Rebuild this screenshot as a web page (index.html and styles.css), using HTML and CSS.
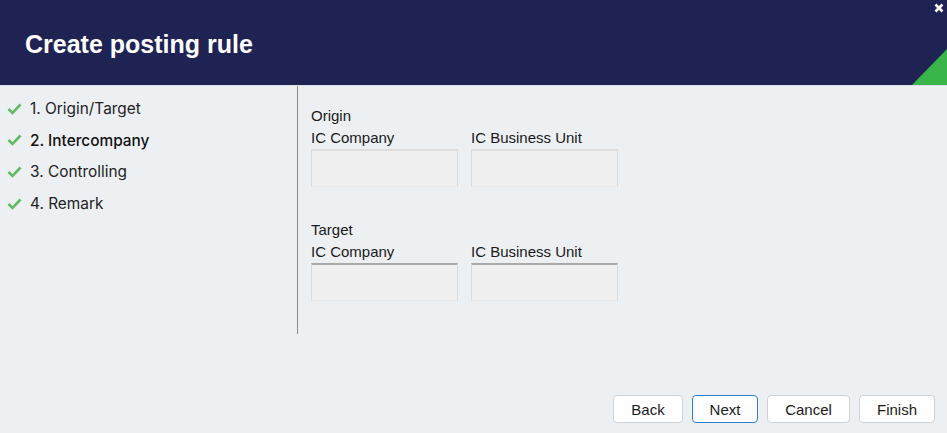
FILE: index.html
```html
<!DOCTYPE html>
<html lang="en">
<head>
    <meta charset="UTF-8">
    <title>Create posting rule</title>
    <link rel="stylesheet" href="styles.css">
</head>
<body>
    <div class="dialog">
        <header class="dialog-header">
            <h1>Create posting rule</h1>
            <svg class="close" viewBox="0 0 10 10"><path d="M1.5 1.5 L8.5 8.5 M8.5 1.5 L1.5 8.5"/></svg>
            <span class="corner"></span>
        </header>

        <div class="dialog-body">
            <ul class="steps">
                <li><svg class="check" viewBox="0 0 15 12"><path d="M1.5 6 L5.5 10 L13.5 1.5"/></svg>1. Origin/Target</li>
                <li class="active"><svg class="check" viewBox="0 0 15 12"><path d="M1.5 6 L5.5 10 L13.5 1.5"/></svg>2. Intercompany</li>
                <li><svg class="check" viewBox="0 0 15 12"><path d="M1.5 6 L5.5 10 L13.5 1.5"/></svg>3. Controlling</li>
                <li><svg class="check" viewBox="0 0 15 12"><path d="M1.5 6 L5.5 10 L13.5 1.5"/></svg>4. Remark</li>
            </ul>

            <div class="content">
                <section class="group">
                    <div class="group-title">Origin</div>
                    <div class="fields">
                        <div class="field">
                            <label>IC Company</label>
                            <div class="box"></div>
                        </div>
                        <div class="field">
                            <label>IC Business Unit</label>
                            <div class="box"></div>
                        </div>
                    </div>
                </section>

                <section class="group">
                    <div class="group-title">Target</div>
                    <div class="fields">
                        <div class="field">
                            <label>IC Company</label>
                            <div class="box dark"></div>
                        </div>
                        <div class="field">
                            <label>IC Business Unit</label>
                            <div class="box dark"></div>
                        </div>
                    </div>
                </section>
            </div>
        </div>

        <footer class="dialog-footer">
            <button class="btn back">Back</button>
            <button class="btn next">Next</button>
            <button class="btn cancel">Cancel</button>
            <button class="btn finish">Finish</button>
        </footer>
    </div>
</body>
</html>
```

FILE: styles.css
```css
html, body {
    margin: 0;
    padding: 0;
}

body {
    font-family: 'Liberation Sans', Arial, sans-serif;
    background-color: #edf0f3;
    color: #1a1a1a;
}

.dialog {
    display: flex;
    flex-direction: column;
    height: 433px;
    overflow: hidden;
}

.dialog-header {
    position: relative;
    height: 86px;
    background-color: #1f2353;
    border-bottom: 1px solid #dde1e6;
    display: flex;
    align-items: center;
    padding-left: 25px;
    box-sizing: border-box;
    overflow: hidden;
}

.dialog-header h1 {
    margin: 0;
    color: #fff;
    font-size: 25px;
    font-weight: bold;
    padding-top: 4px;
}

.close {
    position: absolute;
    top: 3px;
    right: 3px;
    width: 10px;
    height: 10px;
    fill: none;
    stroke: #fff;
    stroke-width: 2.6;
}

.corner {
    position: absolute;
    right: 0;
    bottom: 0;
    width: 0;
    height: 0;
    border-left: 35px solid transparent;
    border-bottom: 36px solid #39b54a;
}

.dialog-body {
    flex: 1;
    display: flex;
    align-items: flex-start;
}

.steps {
    list-style: none;
    margin: 0;
    padding: 7px 0 0 7px;
    width: 290px;
    height: 241px;
    border-right: 1px solid #8a8a8a;
    font-family: Inter, 'Noto Sans', sans-serif;
    font-size: 15.4px;
    color: #222;
}

.steps li {
    display: flex;
    align-items: center;
    height: 31.6px;
}

.steps li.active {
    font-weight: 500;
    color: #111;
}

.check {
    width: 15px;
    height: 12px;
    margin-right: 8px;
    fill: none;
    stroke: #62bb62;
    stroke-width: 2.6;
}

.content {
    padding: 19px 0 0 13px;
    font-size: 15px;
}

.group {
    margin-bottom: 32px;
}

.group-title, .field label {
    display: block;
    line-height: 22px;
    height: 22px;
}

.fields {
    display: flex;
    gap: 13px;
}

.box {
    width: 147px;
    height: 38px;
    box-sizing: border-box;
    background-color: #f0f0f0;
    border: 1px solid #dadada;
    border-top: 2px solid #dcdcdc;
    border-bottom-color: #e8e8e8;
}

.box.dark {
    border-top: 2px solid #a9a9a9;
}

.dialog-footer {
    display: flex;
    justify-content: flex-end;
    gap: 9px;
    padding: 0 12px 10px 0;
}

.btn {
    height: 28px;
    background-color: #fff;
    border: 1px solid #cfd3d8;
    border-radius: 4px;
    font-family: 'Liberation Sans', Arial, sans-serif;
    font-size: 15px;
    color: #1a1a1a;
    padding: 0;
    cursor: pointer;
}

.back { width: 70px; }
.next { width: 66px; border-color: #2f7fd1; }
.cancel { width: 83px; }
.finish { width: 76px; }
```
